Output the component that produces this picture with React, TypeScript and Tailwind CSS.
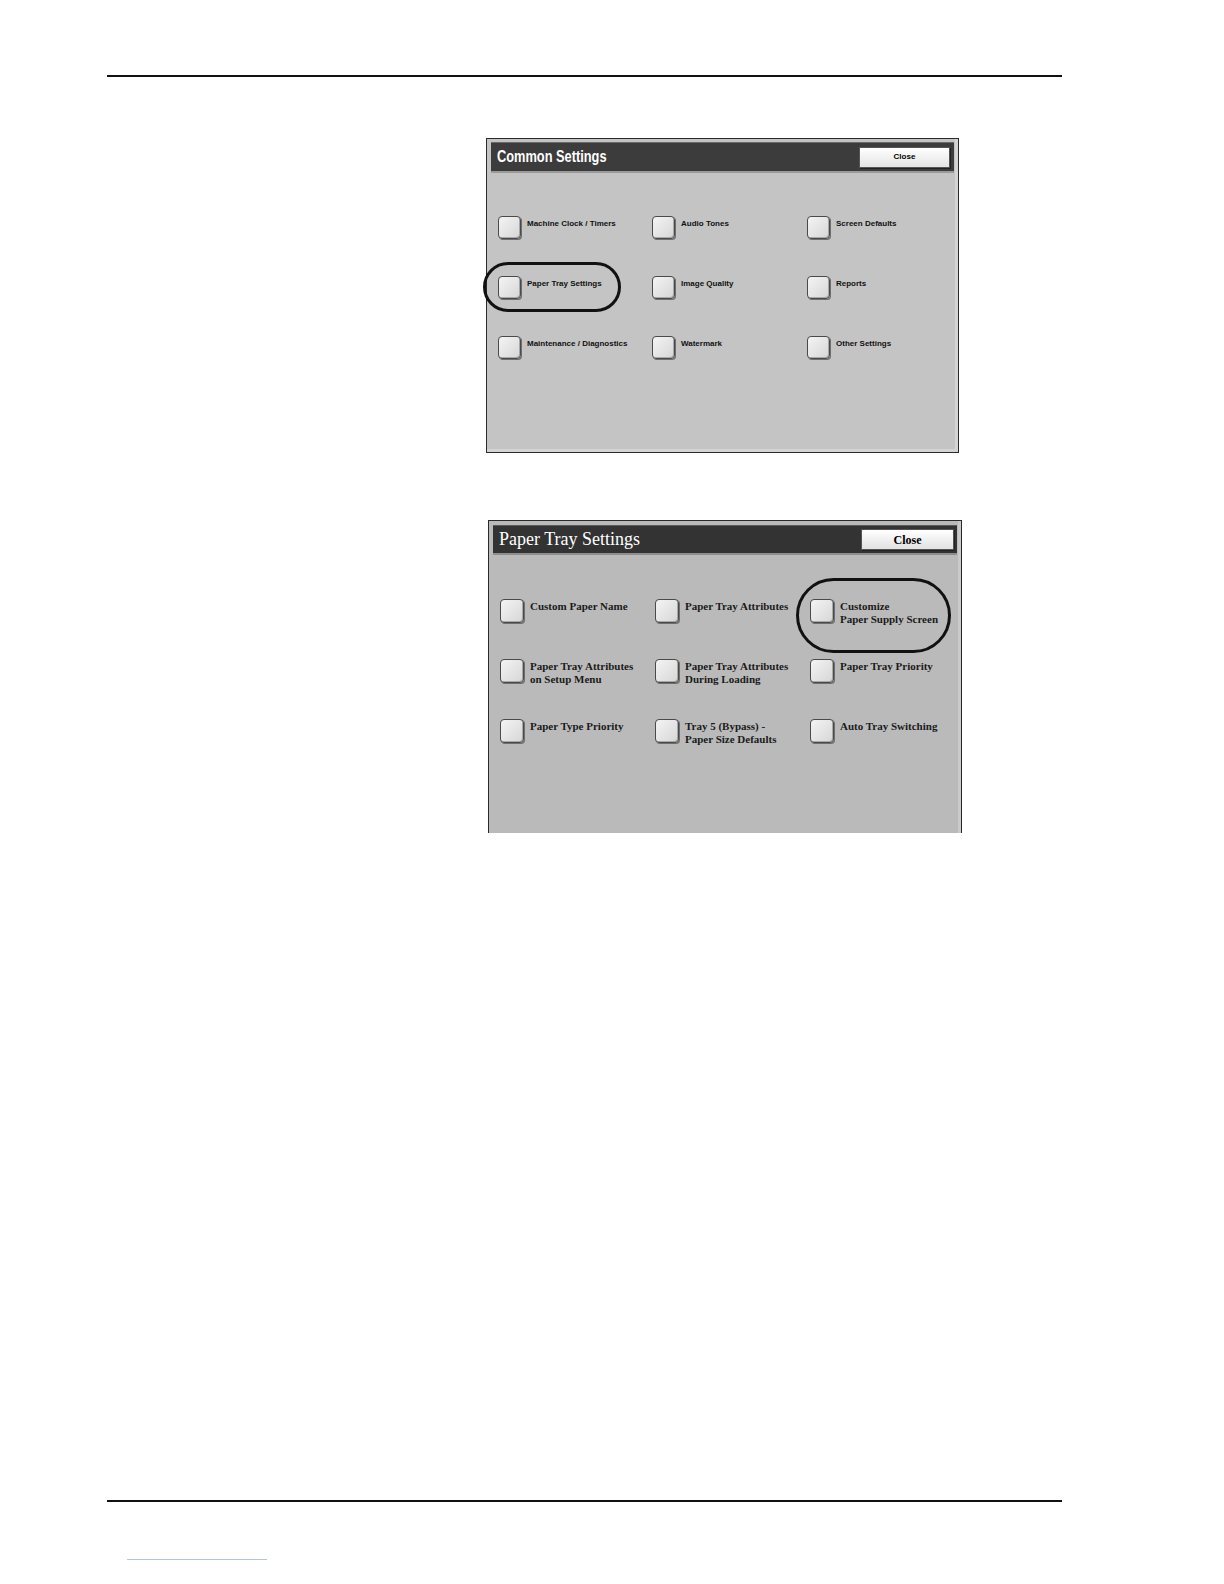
import React from "react";

const commonItems = [
  ["Machine Clock / Timers"],
  ["Audio Tones"],
  ["Screen Defaults"],
  ["Paper Tray Settings"],
  ["Image Quality"],
  ["Reports"],
  ["Maintenance / Diagnostics"],
  ["Watermark"],
  ["Other Settings"],
];

const trayItems = [
  ["Custom Paper Name"],
  ["Paper Tray Attributes"],
  ["Customize", "Paper Supply Screen"],
  ["Paper Tray Attributes", "on Setup Menu"],
  ["Paper Tray Attributes", "During Loading"],
  ["Paper Tray Priority"],
  ["Paper Type Priority"],
  ["Tray 5 (Bypass) -", "Paper Size Defaults"],
  ["Auto Tray Switching"],
];

function Box({ size }: { size: string }) {
  return (
    <div
      className={`${size} shrink-0 rounded-[4px] border border-[#4a4a4a] bg-gradient-to-br from-[#f4f4f4] to-[#d6d6d6] shadow-[1px_1px_0_#6e6e6e,inset_-1px_-1px_0_#a8a8a8]`}
    />
  );
}

export default function App() {
  return (
    <div className="relative h-screen w-full overflow-hidden bg-white pl-[107px]">
      <div className="pt-[75px]">
        <div className="h-[2px] w-[955px] bg-[#111]" />
      </div>

      {/* Common Settings screen */}
      <div className="relative ml-[379px] mt-[61px] h-[315px] w-[473px] border border-[#2a2a2a] bg-[#c4c4c4] shadow-[inset_-3px_-3px_0_#d4d4d4]">
        <div className="px-[4px] pt-[3px]">
          <div className="flex h-[29px] items-center justify-between border-t border-[#6a6a6a] bg-[#3c3c3c] pl-[6px] pr-[4px] shadow-[0_2px_0_#9a9a9a]">
            <span className="origin-left scale-x-[0.8] font-['Liberation_Sans',sans-serif] text-[16px] font-bold text-white">
              Common Settings
            </span>
            <div className="flex h-[21px] w-[91px] items-center justify-center border border-[#555] bg-gradient-to-b from-[#ffffff] to-[#e4e4e4] shadow-[1px_1px_0_#222]">
              <span className="font-['Liberation_Sans',sans-serif] text-[8px] font-bold text-black">Close</span>
            </div>
          </div>
        </div>
        <div className="mt-[45px] grid grid-cols-[154px_155px_155px] auto-rows-[60px] pl-[11px]">
          {commonItems.map((lines) => (
            <div key={lines[0]} className="flex items-start gap-[6px]">
              <Box size="h-[23px] w-[23px]" />
              <div className="pt-[3px] font-['Liberation_Sans',sans-serif] text-[8px] font-bold leading-[10px] text-[#111]">
                {lines.map((l) => (
                  <div key={l} className="whitespace-nowrap">{l}</div>
                ))}
              </div>
            </div>
          ))}
        </div>
        <div className="absolute left-[-4px] top-[123px] h-[50px] w-[138px] rounded-[26px] border-[3px] border-[#111]" />
      </div>

      {/* Paper Tray Settings screen */}
      <div className="relative ml-[381px] mt-[67px] h-[313px] w-[474px] border border-b-0 border-[#2a2a2a] bg-[#bababa] shadow-[inset_-3px_0_0_#cacaca]">
        <div className="px-[4px] pt-[4px]">
          <div className="flex h-[28px] items-center justify-between border-t border-[#5a5a5a] bg-[#333333] pl-[6px] pr-[3px] shadow-[0_2px_0_#8e8e8e]">
            <span className="font-['Liberation_Serif',serif] text-[18px] text-white">Paper Tray Settings</span>
            <div className="flex h-[21px] w-[93px] items-center justify-center border border-[#555] bg-gradient-to-b from-[#ffffff] to-[#e2e2e2] shadow-[1px_1px_0_#222]">
              <span className="font-['Liberation_Serif',serif] text-[12px] font-bold text-black">Close</span>
            </div>
          </div>
        </div>
        <div className="mt-[46px] grid grid-cols-[155px_155px_155px] auto-rows-[60px] pl-[11px]">
          {trayItems.map((lines) => (
            <div key={lines.join(" ")} className="flex items-start gap-[6px]">
              <Box size="h-[24px] w-[24px]" />
              <div className="pt-[1px] font-['Liberation_Serif',serif] text-[11px] font-bold leading-[13px] text-[#1a1a1a]">
                {lines.map((l) => (
                  <div key={l} className="whitespace-nowrap">{l}</div>
                ))}
              </div>
            </div>
          ))}
        </div>
        <div className="absolute left-[307px] top-[57px] h-[75px] w-[155px] rounded-[38px] border-[3px] border-[#111]" />
      </div>

      <div className="mt-[667px] h-[2px] w-[955px] bg-[#111]" />
      <div className="ml-[20px] mt-[57px] h-px w-[140px] bg-[#b8c0ec]" />
    </div>
  );
}
